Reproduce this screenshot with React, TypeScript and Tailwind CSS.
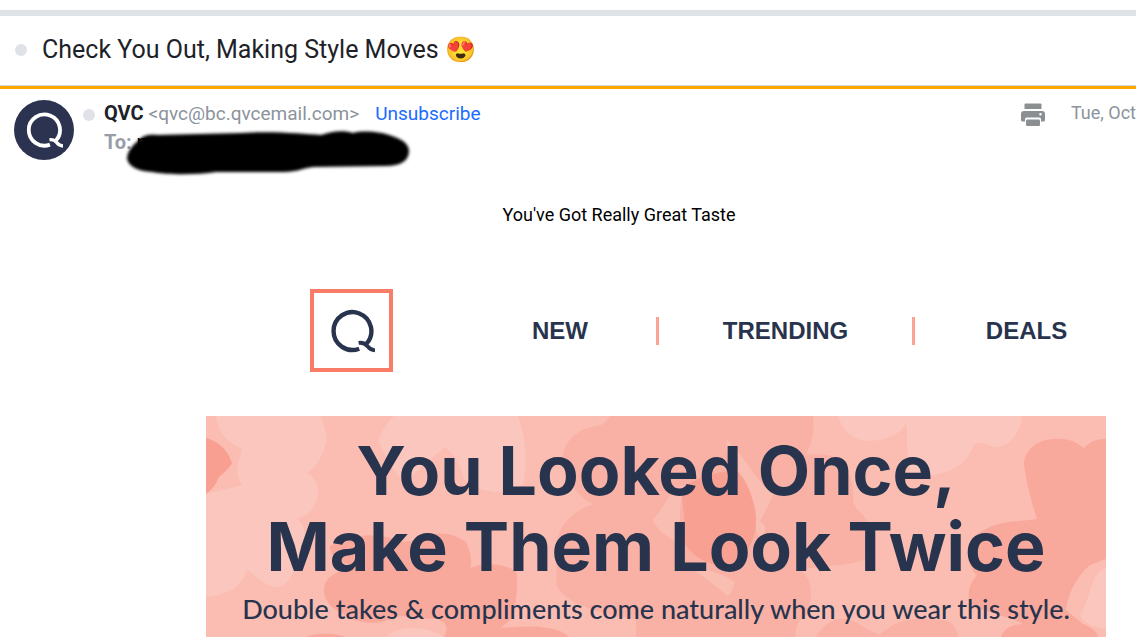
function QMark({ className, weight }: { className: string; weight: number }) {
  return (
    <svg viewBox="0 0 46 46" className={className} fill="none" stroke="currentColor" strokeWidth={weight} aria-hidden="true">
      <path d="M30.200 40.700A18.900 18.900 0 1 1 37.400 35.800" />
      <path d="M29.600 34.900C34 34.200 36 35.300 38.500 38.300C40.500 40.800 43 42.200 46 42.400" strokeWidth={weight - 0.6} />
    </svg>
  );
}

function PrintIcon() {
  return (
    <svg viewBox="0 0 24 24" className="size-6" fill="#8b8f92" aria-hidden="true">
      <path d="M4.500.5h15q1 0 1 1V6h-17V1.500q0-1 1-1z" />
      <path
        fillRule="evenodd"
        d="M3 8h18q3 0 3 3v6q0 1.500-1.500 1.500H20V16q0-1.500-1.500-1.500h-13Q4 14.500 4 16v2.500H1.500Q0 18.500 0 17v-6q0-3 3-3zm16.500 2a1.300 1.300 0 1 0 0 2.600 1.300 1.300 0 0 0 0-2.600z"
      />
      <rect x="5" y="16.500" width="14" height="6.500" rx="1.200" />
    </svg>
  );
}

function Scribble() {
  return (
    <svg viewBox="0 0 290 50" className="absolute -top-px left-5 h-[50px] w-[290px] max-w-none" aria-hidden="true">
      <defs>
        <filter id="soft" x="-5%" y="-15%" width="110%" height="130%">
          <feGaussianBlur stdDeviation="1.800" />
        </filter>
      </defs>
      <path
        filter="url(#soft)"
        d="M3 31C4 23 9 18 15 13C19 8 25 7 34 8C60 7 92 7 118 6C150 4 180 7 197 8C208 4 220 3 229 6C240 3 258 5 268 9C278 12 285 17 285 24C285 34 276 39 262 39L190 40C178 41 174 45 160 45L92 45C72 48 44 48 28 45C14 44 4 40 3 31Z"
      />
    </svg>
  );
}

function Petals() {
  return (
    <svg viewBox="0 0 900 221" preserveAspectRatio="xMidYMin slice" className="absolute inset-0 size-full" aria-hidden="true">
      <rect width="900" height="221" fill="#fbbdb2" />
      <g fill="#fbc6bd">
        <path d="M10 0H114C119 9 120 18 121 24C117 38 113 48 101 57C110 62 113 71 112 81C108 91 106 98 91 103C103 112 99 130 90 148C86 164 78 171 69 171C56 168 48 158 41 154C35 171 22 179 0 181V78L36 69C31 60 29 57 36 33C24 28 12 18 10 0Z" />
        <path d="M188 0H312C320 22 322 45 317 68C304 80 276 79 258 63C254 46 248 39 239 31C226 42 212 54 199 66C185 54 176 32 172 24C177 14 181 7 188 0Z" />
        <path d="M632 0H699V8L701 10C700 30 702 45 705 61C740 60 760 52 768 28C774 24 785 32 792 31C806 29 815 14 816 0Z" />
        <path d="M180 221C192 210 218 208 238 221Z" />
      </g>
      <path d="M632 0C637 14 645 25 664 25C682 24 696 17 699 8L701 10C700 30 702 45 705 61L640 61L620 0Z" fill="#fbbdb2" />
      <path d="M632 0C637 14 645 25 664 25C682 24 696 17 699 8V0Z" fill="#fbc6bd" />
      <path d="M404 0C400 7 395 10 390 10C370 13 356 28 357 43C360 65 372 82 388 88C366 94 349 112 350 136C350 149 351 160 350 166C351 184 392 199 430 203L430 221H589C590 211 593 202 601 199C608 178 606 163 595 154C610 150 650 150 660 142C667 135 666 115 663 108C658 98 648 93 647 84C649 70 642 45 626 40C616 37 607 39 600 38C608 24 608 12 607 0Z" fill="#fab1a5" />
      <g fill="#fabdb2">
        <path d="M521 24C545 48 554 72 568 77C561 92 557 100 554 105C560 110 561 112 556 121C548 120 549 105 550 94C545 79 539 66 532 55C522 45 519 34 521 24Z" />
        <path d="M447 104C465 81 466 72 478 69C471 95 474 119 480 133C470 122 454 121 447 104Z" />
        <path d="M482 148C502 154 516 157 529 166C525 176 523 182 520 179C509 168 501 165 482 148Z" />
      </g>
      <g fill="#f9a99c">
        <path d="M0 22C15 26 23 37 26 47C20 57 13 59 11 65C8 72 3 75 0 78Z" fill="#f89f91" />
        <path d="M124 130C143 120 166 115 190 124C207 129 211 121 226 119C239 115 251 120 260 126C266 139 266 148 264 153C275 145 303 148 310 156C313 170 309 190 308 198C307 203 300 207 295 212C320 210 350 208 363 221H238C243 211 240 206 231 203C209 203 199 197 184 203C166 212 143 204 136 197C120 190 118 179 118 174C118 160 132 155 151 150C134 148 123 140 124 130Z" />
        <path d="M100 221C114 216 130 217 139 221Z" />
        <path d="M900 23C890 23 885 25 878 32C869 26 864 22 848 23C830 23 818 36 818 48C820 65 826 89 831 103C810 106 790 104 770 119C761 130 760 147 771 160C762 166 760 185 766 190C785 198 805 201 817 208C805 208 797 214 795 221H892C890 213 884 211 877 208L860 194C862 175 875 156 884 149L900 143Z" />
        <path d="M610 221C617 208 627 202 637 203C650 203 656 211 673 219C684 209 699 199 733 204C747 204 750 211 752 221Z" fill="#fab1a5" />
      </g>
      <path d="M476 73C491 60 520 53 532 56C543 66 549 89 550 102C551 127 537 145 519 150C500 150 478 135 476 120C482 110 475 89 476 73Z" fill="#f8a091" />
      <path d="M900 151C883 159 887 178 874 199C879 209 891 212 900 213Z" fill="#fbc6bd" />
    </svg>
  );
}

export default function App() {
  return (
    <div className="overflow-hidden bg-white pt-2.5 font-['Roboto',sans-serif]">
      <header className="flex items-center gap-[15px] border-t-[6px] border-b border-t-[#dfe3e8] border-b-[#d5d8dd] pt-3.5 pr-4 pb-[15px] pl-[15px]">
        <span className="size-3 shrink-0 rounded-full bg-[#dfe3e8]" />
        <h1 className="text-[25px] leading-10 text-[#1d2228]">Check You Out, Making Style Moves 😍</h1>
      </header>

      <article className="border-t-[3px] border-[#ffa700]">
        <div className="flex items-start pt-[11px] pl-3.5">
          <div className="flex size-[60px] shrink-0 items-center justify-center rounded-full bg-[#2b3350] text-white">
            <QMark className="size-[38px]" weight={4.6} />
          </div>
          <span className="mt-[9px] ml-[9px] size-3 shrink-0 rounded-full bg-[#dfe3e8]" />
          <div className="ml-[9px] min-w-0 flex-1 text-xl leading-7 whitespace-nowrap text-[#8b939c]">
            <p className="-mt-px">
              <b className="font-bold text-[#1d2228]">QVC</b> <span className="text-[19px]">&lt;qvc@bc.qvcemail.com&gt;</span>
              <a href="#unsubscribe" className="ml-4 text-[19px] text-[#1a6dff]">Unsubscribe</a>
            </p>
            <p className="relative">
              <b className="font-bold text-[#979ea8]">To:</b> <span className="text-black">n</span>
              <Scribble />
            </p>
          </div>
          <button type="button" aria-label="Print" className="mt-[3px] shrink-0">
            <PrintIcon />
          </button>
          <time className="ml-[26px] shrink-0 text-lg leading-[26px] whitespace-nowrap text-[#8b939c]">Tue, Oct</time>
        </div>

        <p className="mt-[41px] pl-[102px] text-center text-lg leading-7 text-black">You've Got Really Great Taste</p>

        <div className="mr-[30px] ml-[206px] text-[#28344d]">
          <nav className="mt-[60px] grid grid-cols-[258fr_192fr_259fr_191fr] items-center font-['Liberation_Sans',sans-serif] text-2xl leading-7 font-bold">
            <a href="#home" aria-label="QVC home" className="ml-[104px] flex size-[83px] items-center justify-center border-4 border-[#f97c66]">
              <QMark className="size-[46px]" weight={4.4} />
            </a>
            <a href="#new" className="text-center">NEW</a>
            <a href="#trending" className="border-x-[3px] border-[#fba496] text-center">TRENDING</a>
            <a href="#deals" className="pl-8 text-center">DEALS</a>
          </nav>

          <section className="relative mt-11 overflow-hidden">
            <Petals />
            <div className="relative pt-4 pb-2.5 text-center font-['Lato',sans-serif] whitespace-nowrap">
              <h2 className="font-['Inter',sans-serif] text-[68px] leading-[76px] font-bold">
                You Looked Once,
                <br />
                Make Them Look Twice
              </h2>
              <p className="mt-[7px] text-[27px] leading-9 font-medium">Double takes &amp; compliments come naturally when you wear this style.</p>
            </div>
          </section>
        </div>
      </article>
    </div>
  );
}
